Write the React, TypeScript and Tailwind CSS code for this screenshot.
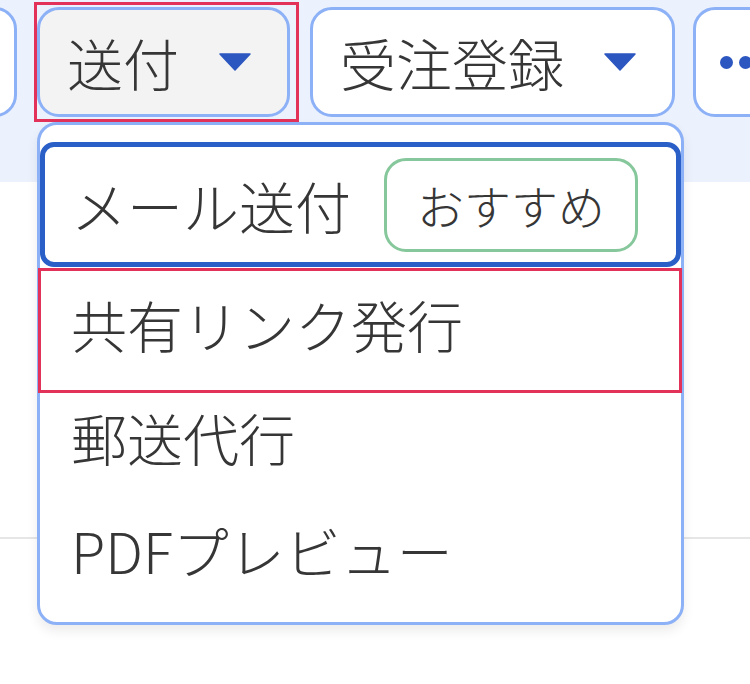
import React from 'react';

const Caret: React.FC = () => (
  <svg width="32" height="18" viewBox="0 0 32 18" className="shrink-0">
    <path d="M1 1 H31 L16 17 Z" fill="#2c57c0" stroke="#2c57c0" strokeWidth="1.5" strokeLinejoin="round" />
  </svg>
);

const font = { fontFamily: '"Noto Sans CJK JP", "Noto Sans", sans-serif' };

const App: React.FC = () => {
  return (
    <div className="relative w-[750px] h-[684px] overflow-hidden bg-white text-[#363636] font-light" style={font}>
      {/* toolbar band */}
      <div className="h-[182px] bg-[#ebf1fd]">
        <div className="flex items-start gap-[20px] pt-[7px] ml-[-100px]">
          <div className="w-[117px] h-[110px] shrink-0 rounded-[22px] border-[3px] border-[#8db1f6] bg-white" />
          <button className="h-[110px] shrink-0 flex items-center gap-[40px] pl-[27px] pr-[36px] rounded-[22px] border-[3px] border-[#8db1f6] bg-[#f3f3f3] text-[56px] leading-none">
            <span>送付</span>
            <Caret />
          </button>
          <button className="h-[110px] shrink-0 flex items-center gap-[40px] pl-[27px] pr-[36px] rounded-[22px] border-[3px] border-[#8db1f6] bg-white text-[56px] leading-none">
            <span>受注登録</span>
            <Caret />
          </button>
          <button className="h-[110px] w-[120px] ml-[-2px] shrink-0 flex items-center gap-[6px] pl-[24px] rounded-[22px] border-[3px] border-[#8db1f6] bg-white">
            <span className="w-[13px] h-[13px] rounded-full bg-[#2c57c0]" />
            <span className="w-[13px] h-[13px] rounded-full bg-[#2c57c0]" />
            <span className="w-[13px] h-[13px] rounded-full bg-[#2c57c0]" />
          </button>
        </div>
      </div>
      <div className="h-[357px] border-b-2 border-[#e6e6e6]" />

      {/* dropdown menu */}
      <div className="absolute left-[37px] top-[122px] w-[647px] pt-[17px] pb-[16px] rounded-[20px] border-[3px] border-[#8db1f6] bg-white shadow-[0_6px_12px_rgba(0,0,0,0.08)] text-[56px] leading-none">
        <div className="h-[125px] flex items-center gap-[33px] pl-[26px] rounded-[14px] border-[5px] border-[#2a5fc8]">
          <span>メール送付</span>
          <span className="h-[94px] flex items-center px-[30px] rounded-[22px] border-[3px] border-[#86c79b] text-[47px]">おすすめ</span>
        </div>
        <div className="h-[113px] flex items-center pl-[31px]">共有リンク発行</div>
        <div className="h-[113px] flex items-center pl-[31px]">郵送代行</div>
        <div className="h-[113px] flex items-center pl-[31px]">PDFプレビュー</div>
      </div>

      {/* annotation boxes */}
      <div className="absolute left-[34px] top-[2px] w-[265px] h-[120px] border-[3px] border-[#e3325a]" />
      <div className="absolute left-[38px] top-[268px] w-[644px] h-[125px] border-[3px] border-[#e3325a]" />
    </div>
  );
};

export default App;
